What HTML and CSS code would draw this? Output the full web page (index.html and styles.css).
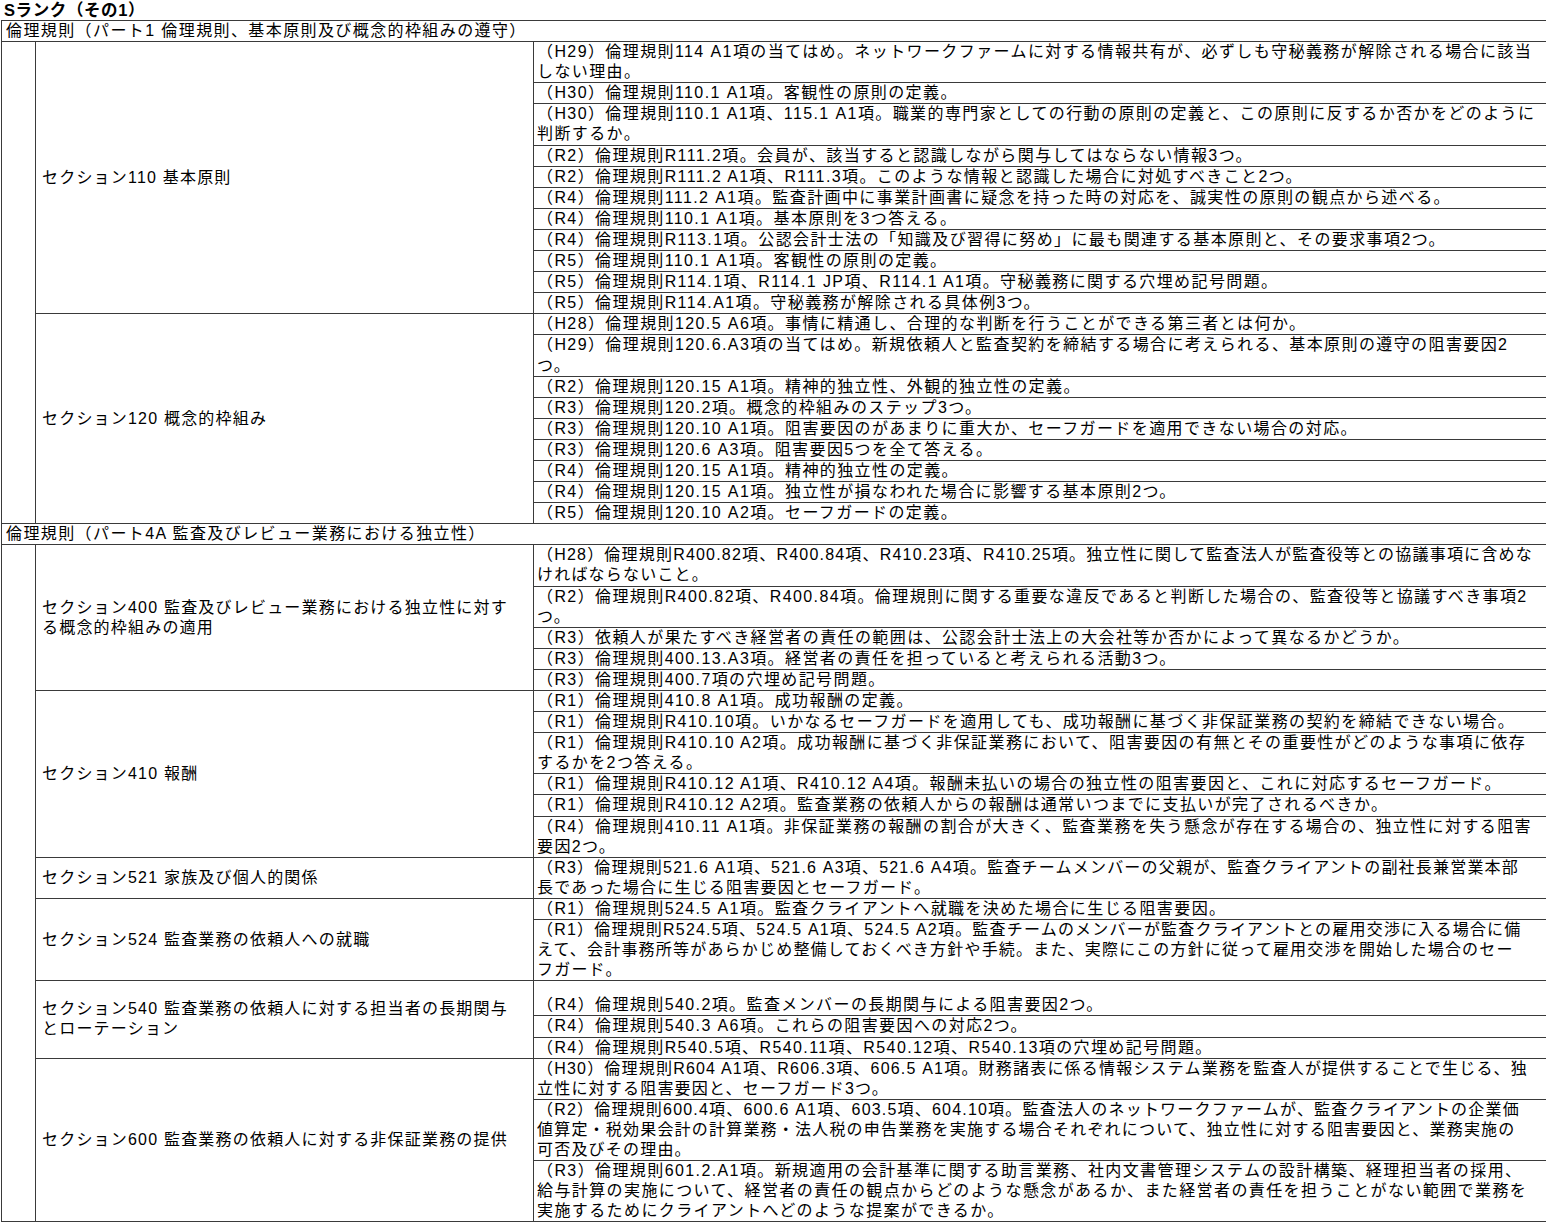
FILE: index.html
```html
<!DOCTYPE html>
<html lang="ja">
<head>
<meta charset="utf-8">
<title>Sランク（その1）</title>
<link rel="stylesheet" href="styles.css">
</head>
<body>
<div class="title">Sランク（その1）</div>
<table class="rank">
<colgroup><col class="c-indent"><col class="c-section"><col class="c-item"></colgroup>
<tbody>
<tr><td colspan="3" class="part">倫理規則（パート1 倫理規則、基本原則及び概念的枠組みの遵守）</td></tr>
<tr><td rowspan="20" class="indent"></td><td rowspan="11" class="section">セクション110 基本原則</td><td class="item">（H29）倫理規則114 A1項の当てはめ。ネットワークファームに対する情報共有が、必ずしも守秘義務が解除される場合に該当<br>しない理由。</td></tr>
<tr><td class="item">（H30）倫理規則110.1 A1項。客観性の原則の定義。</td></tr>
<tr><td class="item">（H30）倫理規則110.1 A1項、115.1 A1項。職業的専門家としての行動の原則の定義と、この原則に反するか否かをどのように<br>判断するか。</td></tr>
<tr><td class="item">（R2）倫理規則R111.2項。会員が、該当すると認識しながら関与してはならない情報3つ。</td></tr>
<tr><td class="item">（R2）倫理規則R111.2 A1項、R111.3項。このような情報と認識した場合に対処すべきこと2つ。</td></tr>
<tr><td class="item">（R4）倫理規則111.2 A1項。監査計画中に事業計画書に疑念を持った時の対応を、誠実性の原則の観点から述べる。</td></tr>
<tr><td class="item">（R4）倫理規則110.1 A1項。基本原則を3つ答える。</td></tr>
<tr><td class="item">（R4）倫理規則R113.1項。公認会計士法の「知識及び習得に努め」に最も関連する基本原則と、その要求事項2つ。</td></tr>
<tr><td class="item">（R5）倫理規則110.1 A1項。客観性の原則の定義。</td></tr>
<tr><td class="item">（R5）倫理規則R114.1項、R114.1 JP項、R114.1 A1項。守秘義務に関する穴埋め記号問題。</td></tr>
<tr><td class="item">（R5）倫理規則R114.A1項。守秘義務が解除される具体例3つ。</td></tr>
<tr><td rowspan="9" class="section">セクション120 概念的枠組み</td><td class="item">（H28）倫理規則120.5 A6項。事情に精通し、合理的な判断を行うことができる第三者とは何か。</td></tr>
<tr><td class="item">（H29）倫理規則120.6.A3項の当てはめ。新規依頼人と監査契約を締結する場合に考えられる、基本原則の遵守の阻害要因2<br>つ。</td></tr>
<tr><td class="item">（R2）倫理規則120.15 A1項。精神的独立性、外観的独立性の定義。</td></tr>
<tr><td class="item">（R3）倫理規則120.2項。概念的枠組みのステップ3つ。</td></tr>
<tr><td class="item">（R3）倫理規則120.10 A1項。阻害要因のがあまりに重大か、セーフガードを適用できない場合の対応。</td></tr>
<tr><td class="item">（R3）倫理規則120.6 A3項。阻害要因5つを全て答える。</td></tr>
<tr><td class="item">（R4）倫理規則120.15 A1項。精神的独立性の定義。</td></tr>
<tr><td class="item">（R4）倫理規則120.15 A1項。独立性が損なわれた場合に影響する基本原則2つ。</td></tr>
<tr><td class="item">（R5）倫理規則120.10 A2項。セーフガードの定義。</td></tr>
<tr><td colspan="3" class="part">倫理規則（パート4A 監査及びレビュー業務における独立性）</td></tr>
<tr><td rowspan="20" class="indent"></td><td rowspan="5" class="section">セクション400 監査及びレビュー業務における独立性に対す<br>る概念的枠組みの適用</td><td class="item tight">（H28）倫理規則R400.82項、R400.84項、R410.23項、R410.25項。独立性に関して監査法人が監査役等との協議事項に含めな<br>ければならないこと。</td></tr>
<tr><td class="item">（R2）倫理規則R400.82項、R400.84項。倫理規則に関する重要な違反であると判断した場合の、監査役等と協議すべき事項2<br>つ。</td></tr>
<tr><td class="item">（R3）依頼人が果たすべき経営者の責任の範囲は、公認会計士法上の大会社等か否かによって異なるかどうか。</td></tr>
<tr><td class="item">（R3）倫理規則400.13.A3項。経営者の責任を担っていると考えられる活動3つ。</td></tr>
<tr><td class="item">（R3）倫理規則400.7項の穴埋め記号問題。</td></tr>
<tr><td rowspan="6" class="section">セクション410 報酬</td><td class="item">（R1）倫理規則410.8 A1項。成功報酬の定義。</td></tr>
<tr><td class="item">（R1）倫理規則R410.10項。いかなるセーフガードを適用しても、成功報酬に基づく非保証業務の契約を締結できない場合。</td></tr>
<tr><td class="item">（R1）倫理規則R410.10 A2項。成功報酬に基づく非保証業務において、阻害要因の有無とその重要性がどのような事項に依存<br>するかを2つ答える。</td></tr>
<tr><td class="item">（R1）倫理規則R410.12 A1項、R410.12 A4項。報酬未払いの場合の独立性の阻害要因と、これに対応するセーフガード。</td></tr>
<tr><td class="item">（R1）倫理規則R410.12 A2項。監査業務の依頼人からの報酬は通常いつまでに支払いが完了されるべきか。</td></tr>
<tr><td class="item">（R4）倫理規則410.11 A1項。非保証業務の報酬の割合が大きく、監査業務を失う懸念が存在する場合の、独立性に対する阻害<br>要因2つ。</td></tr>
<tr><td class="section">セクション521 家族及び個人的関係</td><td class="item tight">（R3）倫理規則521.6 A1項、521.6 A3項、521.6 A4項。監査チームメンバーの父親が、監査クライアントの副社長兼営業本部<br>長であった場合に生じる阻害要因とセーフガード。</td></tr>
<tr><td rowspan="2" class="section">セクション524 監査業務の依頼人への就職</td><td class="item">（R1）倫理規則524.5 A1項。監査クライアントへ就職を決めた場合に生じる阻害要因。</td></tr>
<tr><td class="item tight">（R1）倫理規則R524.5項、524.5 A1項、524.5 A2項。監査チームのメンバーが監査クライアントとの雇用交渉に入る場合に備<br>えて、会計事務所等があらかじめ整備しておくべき方針や手続。また、実際にこの方針に従って雇用交渉を開始した場合のセー<br>フガード。</td></tr>
<tr><td rowspan="3" class="section">セクション540 監査業務の依頼人に対する担当者の長期関与<br>とローテーション</td><td class="item item-tall">（R4）倫理規則540.2項。監査メンバーの長期関与による阻害要因2つ。</td></tr>
<tr><td class="item">（R4）倫理規則540.3 A6項。これらの阻害要因への対応2つ。</td></tr>
<tr><td class="item">（R4）倫理規則R540.5項、R540.11項、R540.12項、R540.13項の穴埋め記号問題。</td></tr>
<tr><td rowspan="3" class="section">セクション600 監査業務の依頼人に対する非保証業務の提供</td><td class="item tight">（H30）倫理規則R604 A1項、R606.3項、606.5 A1項。財務諸表に係る情報システム業務を監査人が提供することで生じる、独<br>立性に対する阻害要因と、セーフガード3つ。</td></tr>
<tr><td class="item tight">（R2）倫理規則600.4項、600.6 A1項、603.5項、604.10項。監査法人のネットワークファームが、監査クライアントの企業価<br>値算定・税効果会計の計算業務・法人税の申告業務を実施する場合それぞれについて、独立性に対する阻害要因と、業務実施の<br>可否及びその理由。</td></tr>
<tr><td class="item">（R3）倫理規則601.2.A1項。新規適用の会計基準に関する助言業務、社内文書管理システムの設計構築、経理担当者の採用、<br>給与計算の実施について、経営者の責任の観点からどのような懸念があるか、また経営者の責任を担うことがない範囲で業務を<br>実施するためにクライアントへどのような提案ができるか。</td></tr>
</tbody>
</table>
</body>
</html>
```
FILE: styles.css
```css
html, body {
  margin: 0;
  padding: 0;
  background: #ffffff;
}
body {
  font-family: "Liberation Sans", "Noto Sans CJK JP", sans-serif;
  font-size: 16px;
  color: #000000;
}
.title {
  height: 20px;
  line-height: 20px;
  padding-left: 4px;
  font-weight: bold;
  font-size: 16.5px;
  letter-spacing: 0.6px;
}
.rank {
  border-collapse: collapse;
  table-layout: fixed;
  width: 1545px;
  margin-left: 1px;
}
.c-indent { width: 34px; }
.c-section { width: 498px; }
.c-item { width: 1013px; }
.rank td {
  border: 1px solid #3a3a3a;
  padding: 0;
  line-height: 20.1px;
  letter-spacing: 1.4px;
  white-space: nowrap;
}
.rank td.part {
  padding-left: 4px;
}
.rank td.section {
  padding-left: 6px;
  vertical-align: middle;
  letter-spacing: 1.2px;
}
.rank td.item {
  padding-left: 3px;
  vertical-align: bottom;
  overflow: hidden;
}
.rank td.item.tight {
  letter-spacing: 1.2px;
}
.rank td.item-tall {
  padding-top: 14px;
}
```
